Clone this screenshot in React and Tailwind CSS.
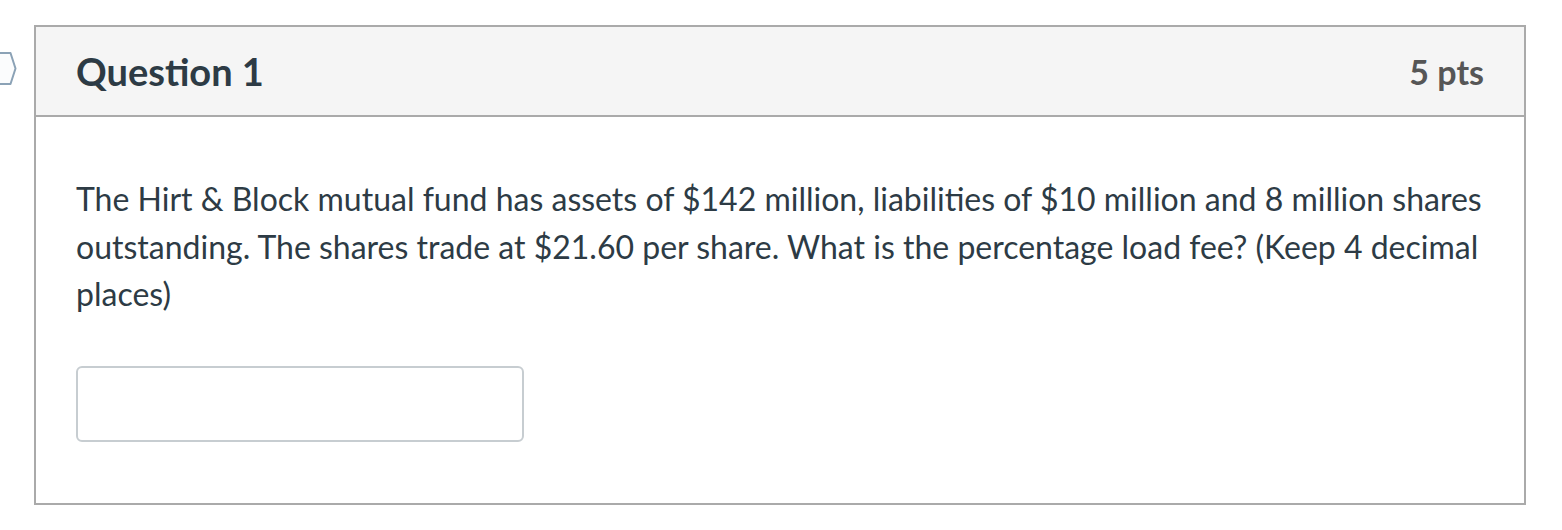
export default function App() {
  return (
    <div
      className="relative h-[530px] w-[1562px] bg-white"
      style={{ fontFamily: "Lato, 'Open Sans', sans-serif" }}
    >
      {/* bookmark marker */}
      <svg
        className="absolute left-0 top-[50px]"
        width="20"
        height="38"
        viewBox="0 0 20 38"
      >
        <path
          d="M-4 3 H10.5 L15.5 18.5 L10.5 34 H-4 Z"
          fill="#fbfcfd"
          stroke="#8ba2b6"
          strokeWidth="2"
          strokeLinejoin="round"
        />
      </svg>

      <div className="flex pt-[25px] pl-[34px]">
        <div className="w-[1492px] h-[480px] border-2 border-[#aaaaaa] flex flex-col">
          <div className="h-[90px] bg-[#f5f5f5] border-b-2 border-[#aaaaaa] flex items-center justify-between pl-[40px] pr-[40px]">
            <h2 className="text-[38px] font-bold text-[#2d3b45]">Question 1</h2>
            <span className="text-[34px] font-bold text-[#565656]">5 pts</span>
          </div>
          <div className="pl-[40px] pr-[38px] pt-[58px]">
            <p className="text-[32px] leading-[47.5px] text-[#2d3b45]">
              The Hirt &amp; Block mutual fund has assets of $142 million, liabilities of $10 million and 8 million shares
              outstanding. The shares trade at $21.60 per share. What is the percentage load fee? (Keep 4 decimal
              places)
            </p>
            <input
              type="text"
              className="mt-[48px] w-[448px] h-[76px] border-2 border-[#c7cdd1] rounded-[6px] bg-white"
            />
          </div>
        </div>
      </div>
    </div>
  );
}
